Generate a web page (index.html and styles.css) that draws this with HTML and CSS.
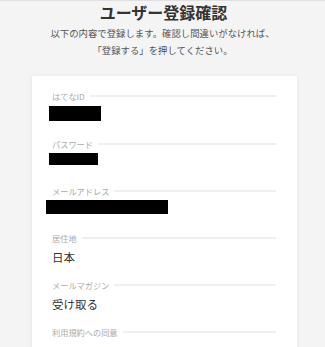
FILE: index.html
```html
<!DOCTYPE html>
<html lang="ja">
  <head>
  <meta charset="utf-8">
  <meta name="viewport" content="width=device-width, initial-scale=1">
  <title>ユーザー登録確認</title>
  <link rel="stylesheet" href="styles.css">
  </head>
  <body>
    <div id="wrapper">
      <div class="intro">
        <h1>ユーザー登録確認</h1>
        <p>以下の内容で登録します。確認し間違いがなければ、<br>「登録する」を押してください。</p>
      </div>

      <div class="confirm-card">
        <div class="field">
          <div class="field-label"><span>はてなID</span></div>
          <div class="field-value"><span class="mask mask-id"></span></div>
        </div>
        <div class="field">
          <div class="field-label"><span>パスワード</span></div>
          <div class="field-value"><span class="mask mask-pw"></span></div>
        </div>
        <div class="field">
          <div class="field-label"><span>メールアドレス</span></div>
          <div class="field-value"><span class="mask mask-mail"></span></div>
        </div>
        <div class="field">
          <div class="field-label"><span>居住地</span></div>
          <div class="field-value">日本</div>
        </div>
        <div class="field">
          <div class="field-label"><span>メールマガジン</span></div>
          <div class="field-value">受け取る</div>
        </div>
        <div class="field">
          <div class="field-label"><span>利用規約への同意</span></div>
          <div class="field-value"></div>
        </div>
      </div>
    </div>
  </body>
</html>
```

FILE: styles.css
```css
html, body {
  margin: 0;
  padding: 0;
}

body {
  background: #f4f4f4;
  border-top: 1px solid #e0e0e0;
  color: #333;
  font-family: "Noto Sans CJK JP", "Noto Sans", sans-serif;
  overflow: hidden;
}

#wrapper {
  width: 325px;
}

.intro {
  text-align: center;
}

.intro h1 {
  margin: 0;
  padding: 1px 0 0 2px;
  font-size: 16px;
  line-height: 20px;
  font-weight: bold;
  color: #333;
}

.intro p {
  margin: 3px 0 0 0;
  font-size: 9.4px;
  line-height: 17px;
  color: #555;
}

.confirm-card {
  width: 265px;
  margin: 17px 0 0 32px;
  padding: 14px 21px 20px 20px;
  box-sizing: border-box;
  background: #fff;
  box-shadow: 0 0 4px rgba(0, 0, 0, 0.07);
}

.field {
  margin-bottom: 12px;
}

.field-label {
  display: flex;
  align-items: center;
  gap: 5px;
  height: 12px;
  font-size: 8.2px;
  line-height: 12px;
  color: #aaa;
  white-space: nowrap;
}

.field-label:after {
  content: "";
  flex: 1;
  height: 2px;
  background: #efefef;
}

.field-value {
  margin-top: 3px;
  height: 20px;
  font-size: 11.5px;
  line-height: 20px;
  color: #333;
}

.mask {
  display: block;
  background: #000;
}

.mask-id {
  width: 52px;
  height: 15px;
  margin: 4px 0 0 -3px;
}

.mask-pw {
  width: 49px;
  height: 12px;
  margin: 0 0 0 -3px;
}

.mask-mail {
  width: 122px;
  height: 14px;
  margin: 3px 0 0 -6px;
}
```
